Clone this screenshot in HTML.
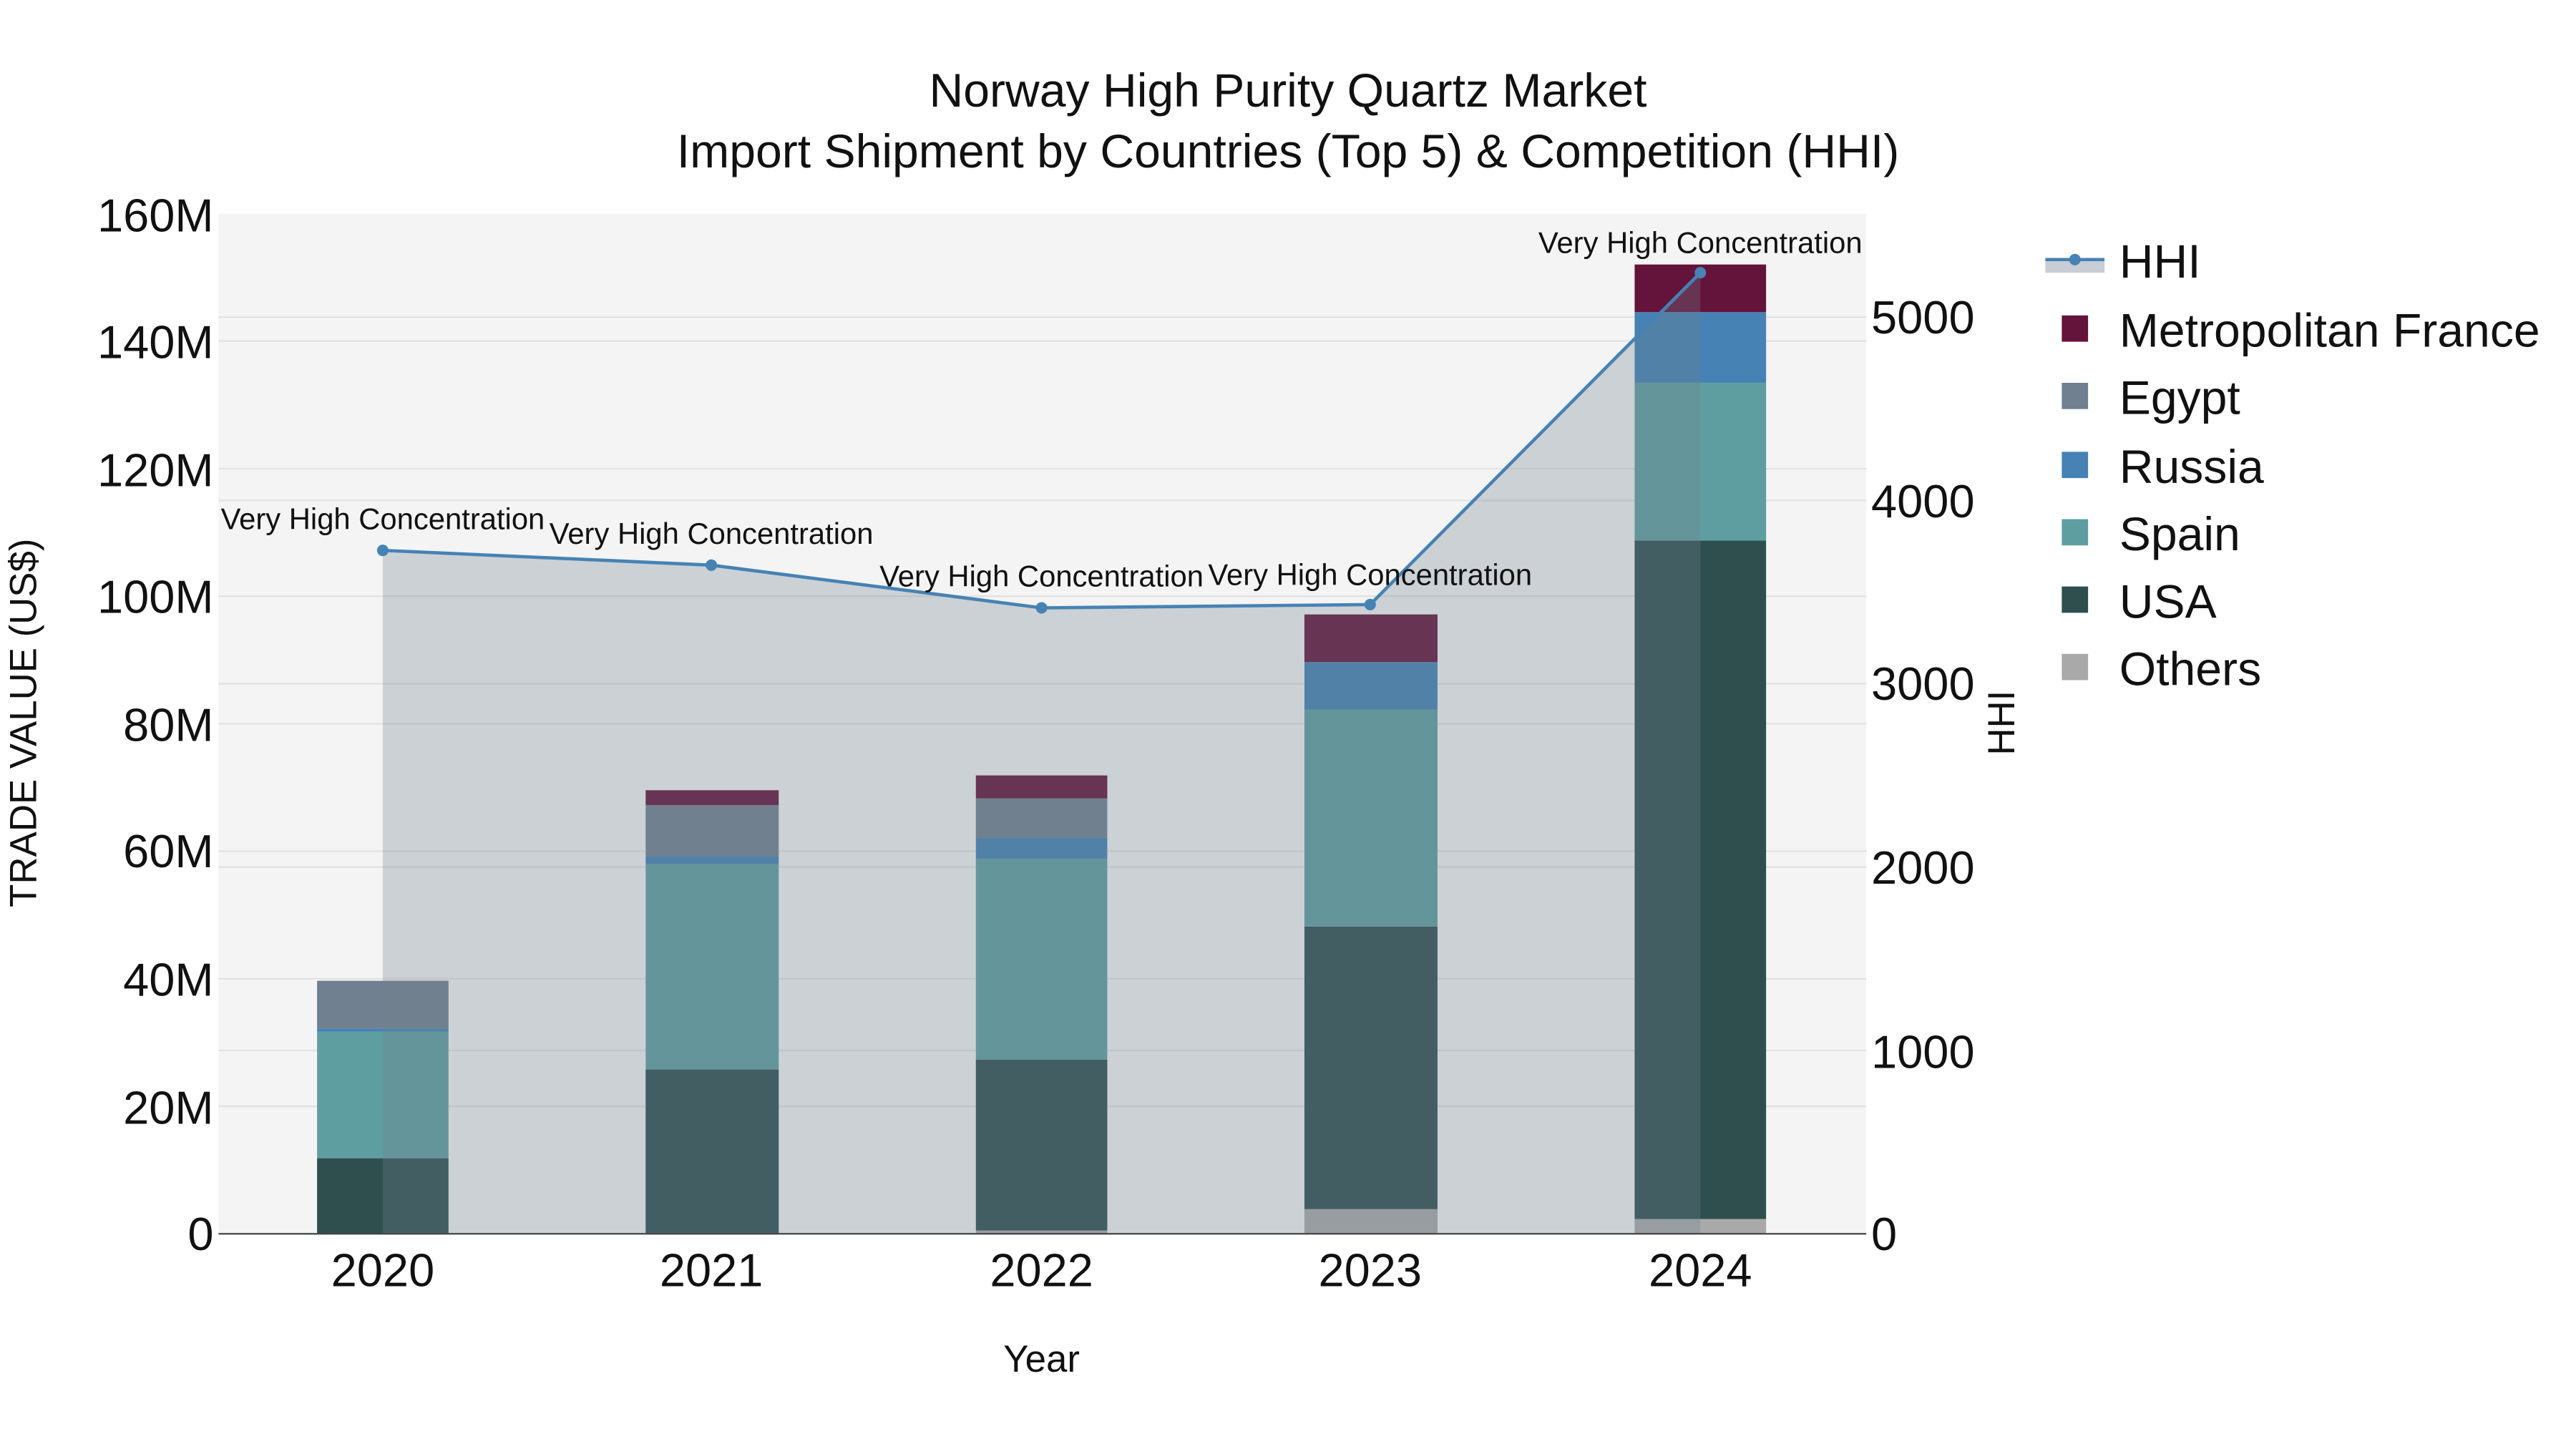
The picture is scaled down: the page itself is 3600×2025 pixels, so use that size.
<!DOCTYPE html>
<html><head><meta charset="utf-8"><style>
html,body{margin:0;padding:0;background:#fff}
svg{display:block}
text{font-family:"Liberation Sans",sans-serif;fill:#111}
</style></head><body>
<svg width="3600" height="2025" viewBox="0 0 1568 882" xmlns="http://www.w3.org/2000/svg">
<rect x="0" y="0" width="1568" height="882" fill="#fff"/>
<rect x="133" y="130" width="1003" height="621" fill="#f4f4f4"/>
<g stroke="#e2e2e2" stroke-width="1">
<line x1="133" x2="1136" y1="673.4" y2="673.4"/><line x1="133" x2="1136" y1="595.8" y2="595.8"/>
<line x1="133" x2="1136" y1="518.1" y2="518.1"/><line x1="133" x2="1136" y1="440.5" y2="440.5"/>
<line x1="133" x2="1136" y1="362.9" y2="362.9"/><line x1="133" x2="1136" y1="285.3" y2="285.3"/>
<line x1="133" x2="1136" y1="207.6" y2="207.6"/>
<line x1="133" x2="1136" y1="639.4" y2="639.4"/><line x1="133" x2="1136" y1="527.8" y2="527.8"/>
<line x1="133" x2="1136" y1="416.2" y2="416.2"/><line x1="133" x2="1136" y1="304.6" y2="304.6"/>
<line x1="133" x2="1136" y1="193" y2="193"/>
</g>
<g>
<rect x="193" y="705" width="80" height="46" fill="#2f4f4f"/>
<rect x="193" y="628" width="80" height="77" fill="#5f9ea0"/>
<rect x="193" y="626" width="80" height="2" fill="#4682b4"/>
<rect x="193" y="597" width="80" height="29" fill="#708090"/>
<rect x="393" y="651" width="81" height="100" fill="#2f4f4f"/>
<rect x="393" y="526" width="81" height="125" fill="#5f9ea0"/>
<rect x="393" y="521" width="81" height="5" fill="#4682b4"/>
<rect x="393" y="490" width="81" height="31" fill="#708090"/>
<rect x="393" y="481" width="81" height="9" fill="#64133a"/>
<rect x="594" y="749" width="80" height="2" fill="#a9a9a9"/>
<rect x="594" y="645" width="80" height="104" fill="#2f4f4f"/>
<rect x="594" y="523" width="80" height="122" fill="#5f9ea0"/>
<rect x="594" y="510" width="80" height="13" fill="#4682b4"/>
<rect x="594" y="486" width="80" height="24" fill="#708090"/>
<rect x="594" y="472" width="80" height="14" fill="#64133a"/>
<rect x="794" y="736" width="81" height="15" fill="#a9a9a9"/>
<rect x="794" y="564" width="81" height="172" fill="#2f4f4f"/>
<rect x="794" y="432" width="81" height="132" fill="#5f9ea0"/>
<rect x="794" y="403" width="81" height="29" fill="#4682b4"/>
<rect x="794" y="374" width="81" height="29" fill="#64133a"/>
<rect x="995" y="742" width="80" height="9" fill="#a9a9a9"/>
<rect x="995" y="329" width="80" height="413" fill="#2f4f4f"/>
<rect x="995" y="233" width="80" height="96" fill="#5f9ea0"/>
<rect x="995" y="190" width="80" height="43" fill="#4682b4"/>
<rect x="995" y="161" width="80" height="29" fill="#64133a"/>
</g>
<polygon points="233,751 233,335 433,344 634,370 834,368 1035,166 1035,751" fill="rgba(112,128,144,0.3)"/>
<line x1="133" x2="1136" y1="751" y2="751" stroke="#444" stroke-width="1"/>
<polyline points="233,335 433,344 634,370 834,368 1035,166" fill="none" stroke="#4682b4" stroke-width="2"/>
<g fill="#4682b4"><circle cx="233" cy="335" r="3.5"/><circle cx="433" cy="344" r="3.5"/><circle cx="634" cy="370" r="3.5"/><circle cx="834" cy="368" r="3.5"/><circle cx="1035" cy="166" r="3.5"/></g>
<g font-size="18.2" text-anchor="middle">
<text x="233" y="322">Very High Concentration</text>
<text x="433" y="331">Very High Concentration</text>
<text x="634" y="357">Very High Concentration</text>
<text x="834" y="356">Very High Concentration</text>
<text x="1035" y="154">Very High Concentration</text>
</g>
<g text-anchor="middle" font-size="28.8">
<text x="784" y="65">Norway High Purity Quartz Market</text>
<text x="784" y="102">Import Shipment by Countries (Top 5) &amp; Competition (HHI)</text>
</g>
<g text-anchor="end" font-size="28.3">
<text x="130" y="761">0</text><text x="130" y="684">20M</text><text x="130" y="606">40M</text>
<text x="130" y="528">60M</text><text x="130" y="451">80M</text><text x="130" y="373">100M</text>
<text x="130" y="296">120M</text><text x="130" y="218">140M</text><text x="130" y="141">160M</text>
</g>
<g font-size="28.3">
<text x="1139" y="761">0</text><text x="1139" y="650">1000</text><text x="1139" y="538">2000</text>
<text x="1139" y="426">3000</text><text x="1139" y="315">4000</text><text x="1139" y="203">5000</text>
</g>
<g text-anchor="middle" font-size="28.3">
<text x="233" y="783">2020</text><text x="433" y="783">2021</text><text x="634" y="783">2022</text>
<text x="834" y="783">2023</text><text x="1035" y="783">2024</text>
</g>
<text x="634" y="835" text-anchor="middle" font-size="23">Year</text>
<text transform="translate(22,440) rotate(-90)" text-anchor="middle" font-size="23">TRADE VALUE (US$)</text>
<text transform="translate(1226,440) rotate(-90)" text-anchor="middle" font-size="23">HHI</text>
<rect x="1245" y="159" width="36" height="7" fill="#c8ccd4"/>
<line x1="1245" x2="1281" y1="158" y2="158" stroke="#4682b4" stroke-width="2"/>
<circle cx="1263" cy="158" r="3.5" fill="#4682b4"/>
<g font-size="28.8">
<text x="1290" y="169">HHI</text>
<rect x="1255" y="192" width="16" height="16" fill="#64133a"/><text x="1290" y="211">Metropolitan France</text>
<rect x="1255" y="233" width="16" height="16" fill="#708090"/><text x="1290" y="252">Egypt</text>
<rect x="1255" y="275" width="16" height="16" fill="#4682b4"/><text x="1290" y="294">Russia</text>
<rect x="1255" y="316" width="16" height="16" fill="#5f9ea0"/><text x="1290" y="335">Spain</text>
<rect x="1255" y="357" width="16" height="16" fill="#2f4f4f"/><text x="1290" y="376">USA</text>
<rect x="1255" y="398" width="16" height="16" fill="#a9a9a9"/><text x="1290" y="417">Others</text>
</g>
</svg>
</body></html>
